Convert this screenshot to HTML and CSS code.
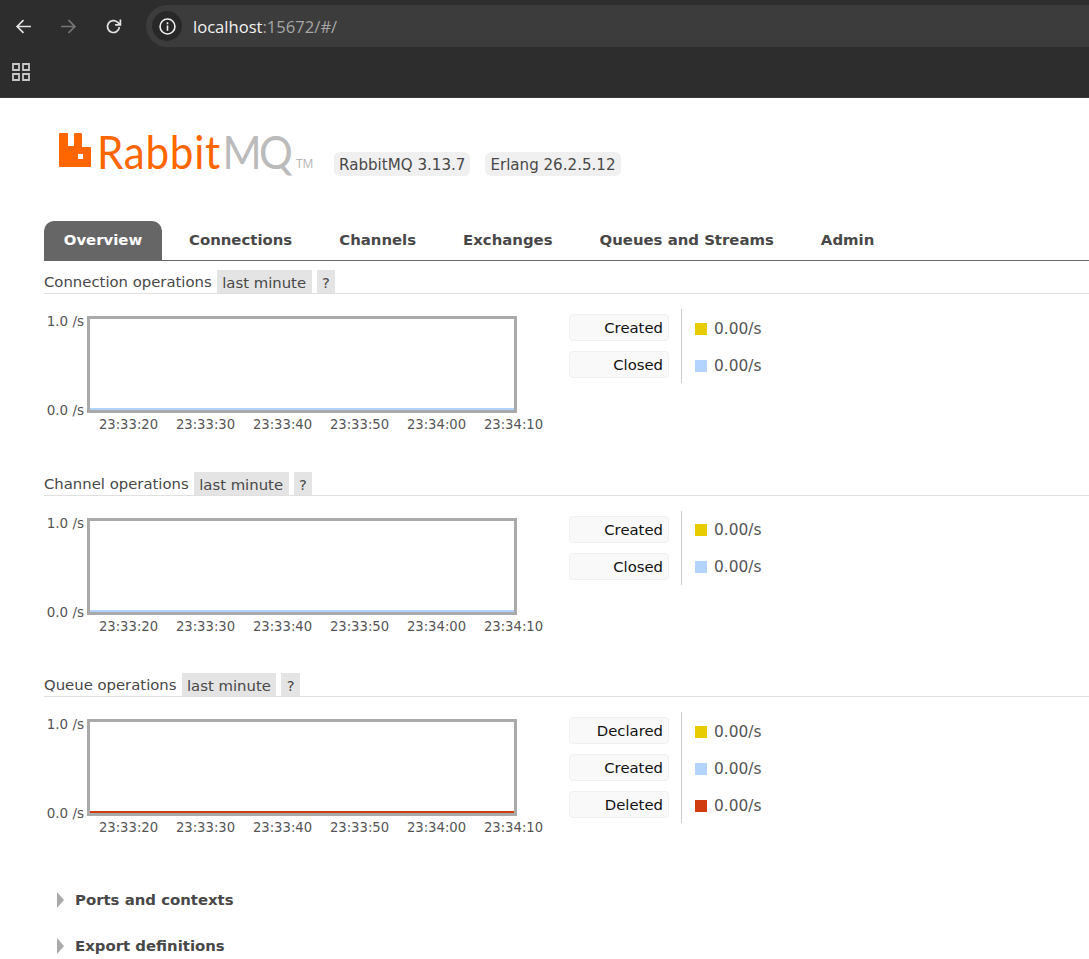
FILE: index.html
```html
<!DOCTYPE html>
<html lang="en">
<head>
    <meta charset="UTF-8">
    <meta name="viewport" content="width=device-width, initial-scale=1.0">
    <title>RabbitMQ Management</title>
    <link rel="stylesheet" href="styles.css">
</head>
<body>
    <div class="browser-bar">
        <div class="nav-row">
            <svg class="nav-icon" viewBox="0 0 16 16"><path d="M15 8H2M8 2L2 8l6 6"/></svg>
            <svg class="nav-icon nav-off" viewBox="0 0 16 16"><path d="M1 8h13M8 2l6 6-6 6"/></svg>
            <svg class="nav-icon" viewBox="0 0 16 16"><path d="M13.5 8.5A5.6 5.6 0 1 1 11.8 4L14 6M14.500 1.500V6.500H9.500"/></svg>
            <div class="address">
                <span class="site-chip">
                    <svg viewBox="0 0 16 16"><circle cx="8" cy="8" r="7"/><path d="M8 7v5M8 4v1.800"/></svg>
                </span>
                <span class="url">localhost<span class="url-dim">:15672/#/</span></span>
            </div>
        </div>
        <div class="bookmarks">
            <svg viewBox="0 0 18 18"><path d="M1 1h6v6H1zM11 1h6v6h-6zM1 11h6v6H1zM11 11h6v6h-6z"/></svg>
        </div>
    </div>

    <div class="page">
        <div class="header">
            <div class="logo">
                <svg viewBox="0 0 33 34"><path d="M0 33V1q0-1 1-1h7q1 0 1 1v12h6V1q0-1 1-1h6q1 0 1 1v13h8q1 0 1 1v18q0 1-1 1H1q-1 0-1-1zM19 21v5h5v-5z" fill-rule="evenodd"/></svg>
                <span class="logo-text"><span class="logo-rabbit">Rabbit</span><span class="logo-mq">MQ</span></span>
                <span class="logo-tm">TM</span>
            </div>
            <span class="version">RabbitMQ 3.13.7</span>
            <span class="version">Erlang 26.2.5.12</span>
        </div>

        <ul class="tabs">
            <li class="tab tab-active">Overview</li>
            <li class="tab">Connections</li>
            <li class="tab">Channels</li>
            <li class="tab">Exchanges</li>
            <li class="tab">Queues and Streams</li>
            <li class="tab">Admin</li>
        </ul>

        <section class="section">
            <h3 class="section-title">Connection operations<span class="pill">last minute</span><span class="pill">?</span></h3>
            <div class="chart-row">
                <div class="chart">
                    <div class="y-axis"><span>1.0 /s</span><span>0.0 /s</span></div>
                    <div class="plot-wrap">
                        <div class="plot"><div class="plot-line line-blue"></div></div>
                        <div class="x-axis"><span>23:33:20</span><span>23:33:30</span><span>23:33:40</span><span>23:33:50</span><span>23:34:00</span><span>23:34:10</span></div>
                    </div>
                </div>
                <div class="legend">
                    <div class="legend-names">
                        <div class="legend-name">Created</div>
                        <div class="legend-name">Closed</div>
                    </div>
                    <div class="legend-values">
                        <div class="legend-value"><i class="swatch swatch-yellow"></i>0.00/s</div>
                        <div class="legend-value"><i class="swatch swatch-blue"></i>0.00/s</div>
                    </div>
                </div>
            </div>
        </section>

        <section class="section">
            <h3 class="section-title">Channel operations<span class="pill">last minute</span><span class="pill">?</span></h3>
            <div class="chart-row">
                <div class="chart">
                    <div class="y-axis"><span>1.0 /s</span><span>0.0 /s</span></div>
                    <div class="plot-wrap">
                        <div class="plot"><div class="plot-line line-blue"></div></div>
                        <div class="x-axis"><span>23:33:20</span><span>23:33:30</span><span>23:33:40</span><span>23:33:50</span><span>23:34:00</span><span>23:34:10</span></div>
                    </div>
                </div>
                <div class="legend">
                    <div class="legend-names">
                        <div class="legend-name">Created</div>
                        <div class="legend-name">Closed</div>
                    </div>
                    <div class="legend-values">
                        <div class="legend-value"><i class="swatch swatch-yellow"></i>0.00/s</div>
                        <div class="legend-value"><i class="swatch swatch-blue"></i>0.00/s</div>
                    </div>
                </div>
            </div>
        </section>

        <section class="section">
            <h3 class="section-title">Queue operations<span class="pill">last minute</span><span class="pill">?</span></h3>
            <div class="chart-row">
                <div class="chart">
                    <div class="y-axis"><span>1.0 /s</span><span>0.0 /s</span></div>
                    <div class="plot-wrap">
                        <div class="plot"><div class="plot-line line-red"></div></div>
                        <div class="x-axis"><span>23:33:20</span><span>23:33:30</span><span>23:33:40</span><span>23:33:50</span><span>23:34:00</span><span>23:34:10</span></div>
                    </div>
                </div>
                <div class="legend">
                    <div class="legend-names">
                        <div class="legend-name">Declared</div>
                        <div class="legend-name">Created</div>
                        <div class="legend-name">Deleted</div>
                    </div>
                    <div class="legend-values">
                        <div class="legend-value"><i class="swatch swatch-yellow"></i>0.00/s</div>
                        <div class="legend-value"><i class="swatch swatch-blue"></i>0.00/s</div>
                        <div class="legend-value"><i class="swatch swatch-red"></i>0.00/s</div>
                    </div>
                </div>
            </div>
        </section>

        <div class="collapsibles">
            <h2 class="collapsible"><i class="arrow"></i>Ports and contexts</h2>
            <h2 class="collapsible"><i class="arrow"></i>Export definitions</h2>
        </div>
    </div>
</body>
</html>
```

FILE: styles.css
```css
* {
    box-sizing: border-box;
}

html, body {
    height: 959px;
    overflow: hidden;
}

body {
    margin: 0;
    background-color: #fff;
    color: #484848;
    font-family: "DejaVu Sans", sans-serif;
    font-size: 14.85px;
}

/* Browser chrome */
.browser-bar {
    height: 98px;
    background-color: #2d2d2d;
    border-bottom: 1px solid #3a3a3a;
}

.nav-row {
    display: flex;
    align-items: center;
    height: 52px;
    padding: 0 0 0 15px;
}

.nav-icon {
    width: 17px;
    height: 17px;
    margin-right: 28px;
    flex: none;
    fill: none;
    stroke: #e3e3e3;
    stroke-width: 1.6;
}

.nav-off {
    stroke: #777;
}

.nav-icon:nth-child(3) {
    margin-right: 24px;
}

.address {
    display: flex;
    align-items: center;
    flex: 1;
    height: 42px;
    padding-left: 6px;
    border-radius: 21px 0 0 21px;
    background-color: #3c3c3c;
}

.site-chip {
    display: flex;
    align-items: center;
    justify-content: center;
    width: 30px;
    height: 30px;
    border-radius: 50%;
    background-color: #282828;
}

.site-chip svg {
    width: 17px;
    height: 17px;
    fill: none;
    stroke: #f0f0f0;
    stroke-width: 1.500;
}

.url {
    margin-left: 11px;
    font-family: "Open Sans", sans-serif;
    font-size: 16.6px;
    color: #f2f2f2;
}

.url-dim {
    color: #a6a6a6;
}

.bookmarks {
    display: flex;
    padding: 11px 0 0 12px;
}

.bookmarks svg {
    width: 18px;
    height: 18px;
    fill: none;
    stroke: #c8c8c8;
    stroke-width: 1.800;
}

/* Page */
.page {
    padding-left: 44px;
}

.header {
    display: flex;
    align-items: flex-start;
    height: 123px;
    padding: 35px 0 0 15px;
}

.logo {
    display: flex;
    align-items: flex-start;
    height: 40px;
    width: 275px;
    flex: none;
}

.logo svg {
    width: 33px;
    height: 34px;
    fill: #ff6600;
    flex: none;
}

.logo-text {
    width: 192px;
    margin: -14px 0 0 5px;
    font-family: "Lato", sans-serif;
    font-size: 47px;
    line-height: 64px;
    white-space: nowrap;
    color: #ff6600;
    transform: scaleX(0.897);
    transform-origin: left;
}

.logo-rabbit {
    letter-spacing: 0.8px;
}

.logo-mq {
    margin-left: 2px;
    letter-spacing: -3px;
    color: #bbb;
}

.logo-tm {
    margin: 25px 0 0 7px;
    font-family: "Open Sans", sans-serif;
    font-size: 12px;
    line-height: 12px;
    color: #b5b5b5;
}

.version {
    margin: 19px 15px 0 0;
    padding: 3px 5px 1px;
    border-radius: 6px;
    background-color: #f0f0f0;
    font-size: 15.1px;
    line-height: 20px;
    white-space: nowrap;
}

/* Tabs */
.tabs {
    display: flex;
    margin: 0;
    padding: 0;
    height: 40px;
    border-bottom: 1px solid #666;
    list-style: none;
}

.tab {
    padding: 0 23.500px;
    font-weight: bold;
    font-size: 14.9px;
    line-height: 39px;
    color: #484848;
}

.tab-active {
    width: 118px;
    padding: 0;
    margin-right: 3.500px;
    text-align: center;
    border-radius: 10px 10px 0 0;
    background-color: #666;
    color: #fff;
}

/* Chart sections */
.section {
    height: 201.500px;
}

.section:first-of-type {
    margin-top: 9px;
}

.section-title {
    display: flex;
    align-items: center;
    height: 24px;
    margin: 0;
    padding-top: 1px;
    border-bottom: 1px solid #e0e0e0;
    font-weight: normal;
    font-size: 14.85px;
    white-space: pre;
}

.pill {
    height: 23px;
    margin-top: -1px;
    padding: 0 5.500px;
    margin-left: 5px;
    background-color: #e4e4e4;
    line-height: 26px;
}

.chart-row {
    display: flex;
    align-items: flex-start;
    margin-top: 15px;
}

.chart {
    display: flex;
    width: 525px;
    padding-top: 7px;
    flex: none;
}

.y-axis {
    display: flex;
    flex-direction: column;
    justify-content: space-between;
    width: 40px;
    height: 103px;
    margin: -2px 3px 0 0;
    text-align: right;
    font-size: 13.5px;
    line-height: 14px;
    color: #555;
}

.plot-wrap {
    width: 482px;
}

.plot {
    display: flex;
    flex-direction: column;
    justify-content: flex-end;
    width: 430px;
    height: 97px;
    border: 3px solid #aaa;
    background-color: #fff;
}

.plot-line {
    height: 2px;
}

.line-blue {
    background-color: #b3d4ff;
}

.line-red {
    background-color: #cf3d10;
}

.x-axis {
    display: grid;
    grid-template-columns: repeat(6, 77px);
    margin: 4px 0 0 3px;
    font-size: 13.2px;
    line-height: 16px;
    color: #555;
    text-align: center;
}

.legend {
    display: flex;
}

.legend-names {
    display: flex;
    flex-direction: column;
    gap: 10px;
    width: 113px;
    padding: 5px 13px 5px 0;
    border-right: 1px solid #ccc;
}

.legend-name {
    width: 100px;
    height: 27px;
    padding-right: 5px;
    border: 1px solid #f0f0f0;
    border-radius: 4px;
    background-color: #f9f9f9;
    text-align: right;
    line-height: 26px;
    color: #111;
}

.legend-values {
    display: flex;
    flex-direction: column;
    gap: 10px;
    padding: 6px 0 0 13px;
    font-size: 15.4px;
}

.legend-value {
    display: flex;
    align-items: center;
    height: 27px;
    color: #555;
}

.swatch {
    width: 12px;
    height: 12px;
    margin-right: 7px;
}

.swatch-yellow {
    background-color: #e6cc00;
}

.swatch-blue {
    background-color: #b3d4ff;
}

.swatch-red {
    background-color: #cf3d10;
}

/* Collapsed panels */
.collapsibles {
    display: flex;
    flex-direction: column;
    gap: 28px;
    margin-top: 16px;
    padding-left: 13px;
}

.collapsible {
    display: flex;
    align-items: center;
    height: 18px;
    margin: 0;
    font-size: 14.9px;
    color: #484848;
}

.arrow {
    width: 0;
    height: 0;
    margin-right: 11px;
    border-style: solid;
    border-width: 8px 0 8px 7px;
    border-color: transparent transparent transparent #aaa;
}
```
